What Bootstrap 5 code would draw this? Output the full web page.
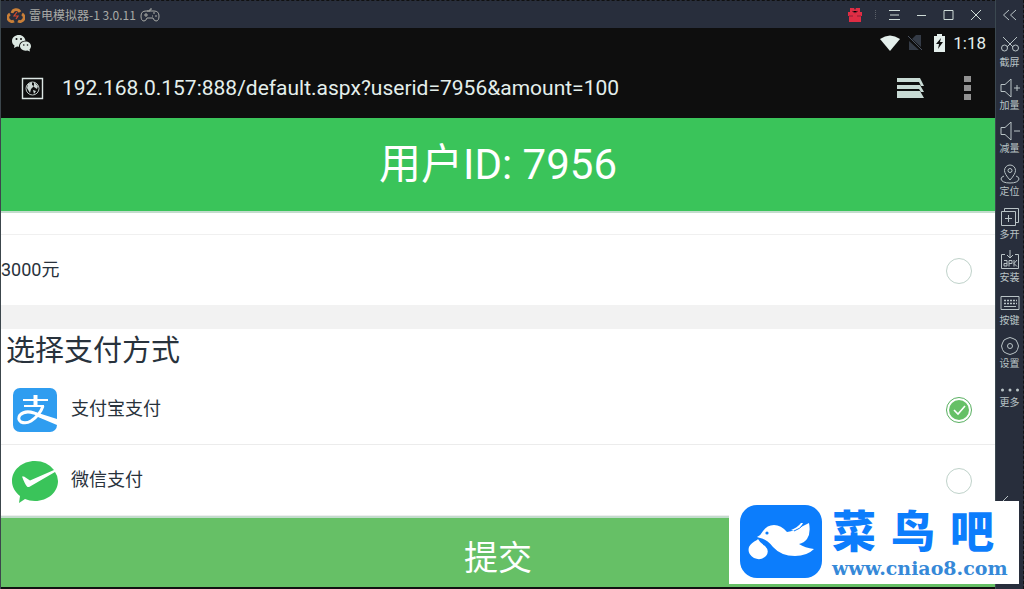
<!DOCTYPE html>
<html lang="zh-CN">
<head>
<meta charset="utf-8">
<meta name="viewport" content="width=device-width, initial-scale=1">
<title>用户ID: 7956</title>
<link href="https://cdn.jsdelivr.net/npm/bootstrap@5.3.0/dist/css/bootstrap.min.css" rel="stylesheet">
<style>
  :root { --chrome: #282e3c; --ink: #28323c; --pay: #3ac45a; --submit: #66c066; --logo: #0c7dfc; }
  body { font-family: Roboto, "Noto Sans CJK SC", sans-serif; color: var(--ink); background: var(--chrome); line-height: 1.5; }
  svg { display: block; flex: none; }
  .plain-btn { border: 0; background: none; padding: 0; color: inherit; }
  .line-icon { fill: none; stroke: currentColor; stroke-width: 1; }

  .emulator { border-left: 1px solid #3c464c; }
  .window-bar { background: var(--chrome); color: #a9aaa6; font: 12px/28px "Noto Sans CJK SC", sans-serif; border-top: 1px dashed #111; height: 28px; padding: 0 13px 0 6px; }
  .window-tools { gap: 16px; color: #cfdcd8; }
  .gift-group { gap: 12px; }
  .status-bar { background: #0e0e0e; color: #e4efec; font-size: 17px; line-height: 30px; padding: 0 9px 0 10px; }
  .address-bar { background: #0e0e0e; color: #e4efec; padding: 0 24px 0 20px; height: 60px; }
  .address { background: none; border: 0; color: inherit; font-size: 21px; padding: 2px 0 0; outline: 0; margin-left: 18px; min-width: 0; }

  .page-title { background: var(--pay); color: #fff; font-size: 42px; line-height: 93px; font-weight: 400; border-bottom: 2px solid #c3dccd; }
  .list-tail { height: 22px; border-bottom: 1px solid #f0f0f0; }
  .choice { height: 70px; padding-right: 23px; font-size: 18px; }
  .choice label { padding-bottom: 2px; }
  .choice + .choice { height: 71px; border-top: 1px solid #ececec; }
  .pay-choice { padding-left: 10px; }
  .pay-choice svg { margin-right: 12px; }
  .divider { height: 24px; background: #f2f2f2; }
  .section-title { font-size: 29px; line-height: 44px; height: 45px; font-weight: 400; padding-left: 5px; }
  .round { appearance: none; width: 26px; height: 26px; margin: 2px 0 0; border: 1px solid #bfd2ca; border-radius: 50%; background: #fff; padding: 2px; }
  .round:checked { border-color: #58b060; background: var(--submit) url("data:image/svg+xml,%3Csvg xmlns='http://www.w3.org/2000/svg' viewBox='0 0 20 20'%3E%3Cpath d='M5 10l4 4 7-8' fill='none' stroke='white' stroke-width='1.6'/%3E%3C/svg%3E") center / 20px no-repeat content-box; background-clip: content-box; }
  .submit { background: var(--submit); color: #fff; font-size: 34px; line-height: 50px; height: 71px; border: 0; border-top: 2px solid #c3dccd; padding: 10px 0 0; }
  .submit-wrap { border-top: 1px solid #eee; border-bottom: 2px solid #111; }

  .side { width: 29px; background: var(--chrome); color: #b9c3c6; border-left: 1px solid #3b4850; border-right: 1px dashed #111; gap: 9px; }
  .side-item { font-size: 10px; line-height: 16px; height: 34px; white-space: nowrap; }
  .side-top { height: 26px; padding-top: 4px; }

  .watermark { position: absolute; right: 5px; bottom: 5px; width: 290px; background: #fff; color: var(--logo); padding: 4px 0 6px 10px; gap: 9px; }
  .mark-name { font: 900 44px/46px "Noto Sans CJK SC", sans-serif; gap: 15px; margin-bottom: 6px; }
  .mark-url { font: 700 19px/20px "DejaVu Serif", serif; color: #3689d8; }
</style>
</head>
<body>
<div class="d-flex min-vh-100 position-relative">
  <main class="emulator flex-grow-1 d-flex flex-column bg-white">
    <div class="window-bar d-flex align-items-center">
      <svg width="18" height="18" viewBox="0 0 18 18" fill="none" stroke="#c97f38" stroke-width="2.8"><path d="M5 7a4.300 4.300 0 0 1 8-1M3 8a4 4 0 0 0 4 7M15 8a4 4 0 0 1-4 7"/><path d="M10 6L7 10h4l-2 3" stroke="#d8482c" stroke-width="1.2"/></svg>
      <span class="ms-1">雷电模拟器-1 3.0.11</span>
      <svg class="line-icon ms-1" width="20" height="14" viewBox="0 0 20 14"><path d="M7 3h3V1h2M6 3h8q5 0 5 5 0 5-3 5-2 0-3-3H7q-1 3-3 3-3 0-3-5 0-5 5-5zM4 7h4M6 5v4M13 5h2M15 8h2M12 8h1"/></svg>
      <div class="window-tools ms-auto d-flex align-items-center">
        <div class="gift-group d-flex align-items-center">
          <button class="plain-btn" aria-label="礼物"><svg width="14" height="16" viewBox="0 0 14 16"><path fill="#df2d44" d="M2 1h4l1 2 1-2h4v4h2v4h-1v6H1V9H0V5h2z"/><path stroke="#8c2136" d="M4 4l3 2 3-2M1 9h4m4 0h4"/></svg></button>
          <svg width="3" height="10" viewBox="0 0 3 10"><path d="M1.500 0v10" stroke="#5b6068" stroke-dasharray="1 1"/></svg>
          <button class="plain-btn" aria-label="菜单"><svg class="line-icon" width="11" height="12" viewBox="0 0 11 12"><path d="M0 1.500h11M1 6h9M0 10.500h11"/></svg></button>
        </div>
        <button class="plain-btn" aria-label="最小化"><svg class="line-icon" width="11" height="12" viewBox="0 0 11 12"><path d="M1 6.500h9"/></svg></button>
        <button class="plain-btn" aria-label="最大化"><svg class="line-icon" width="11" height="12" viewBox="0 0 11 12"><path d="M1 1.500h9v9H1z"/></svg></button>
        <button class="plain-btn" aria-label="关闭"><svg class="line-icon" width="12" height="12" viewBox="0 0 12 12"><path d="M1 1l10 10M11 1L1 11"/></svg></button>
      </div>
    </div>

    <div class="status-bar d-flex align-items-center">
      <svg width="22" height="18" viewBox="0 0 22 18" fill="#dce8e2"><path d="M8 1c-4 0-7 2.500-7 6 0 2 1 3.500 2.500 4.500L3 14l3-1.500 2 .3c0-4 3-6 6.500-6C14 3.500 11.500 1 8 1z"/><path d="M14.500 7.500c-3 0-5.500 2-5.500 4.600s2.500 4.600 5.500 4.600l2-.2 2.500 1-.5-2c1-1 1.500-2 1.500-3.400 0-2.600-2.500-4.600-5.500-4.600z"/><g fill="#0e0e0e"><circle cx="5.500" cy="5" r="1"/><circle cx="10" cy="5" r="1"/><circle cx="12.800" cy="11" r=".8"/><circle cx="16.500" cy="11" r=".8"/></g></svg>
      <svg class="ms-auto" width="20" height="16" viewBox="0 0 20 16"><path d="M0 4Q10-3 20 4L10 16z" fill="#e4efec"/></svg>
      <svg class="ms-2" width="14" height="16" viewBox="0 0 14 16"><path d="M4 4l4-4h5v12zM1 6v9h10z" fill="#343b46"/><path d="M0 1l14 14" stroke="#4a5260"/></svg>
      <svg class="ms-2 ps-1" width="15" height="18" viewBox="0 0 11 18"><path d="M0 2h3V0h5v2h3v16H0z" fill="#e4efec"/><path d="M7 4l-5 6h3l-1 5 5-7H6z" fill="#0e0e0e"/></svg>
      <span class="ms-2">1:18</span>
    </div>

    <div class="address-bar d-flex align-items-center">
      <svg width="23" height="23" viewBox="0 0 23 23"><path d="M1.500 1.500h20v20h-20z" fill="none" stroke="#dce6e3" stroke-width="1.400"/><circle cx="11.500" cy="11.500" r="6.500" fill="none" stroke="#b9c2c0"/><path d="M7 7l4-2v3l2 1-3 3-1 4-3-5zM13 5l4 4-1 3-3-2zM12 13l3 1-2 3z" fill="#cbd5d2"/></svg>
      <input class="address flex-grow-1" type="text" aria-label="网址" value="192.168.0.157:888/default.aspx?userid=7956&amp;amount=100">
      <button class="plain-btn" aria-label="标签页"><svg width="28" height="22" viewBox="0 0 28 22" fill="#c8dad4"><path d="M1 1h23l4 8h-3l-2-4H1zM1 8h23l4 7h-3l-2-3H1zM1 14h23l4 7H1z"/></svg></button>
      <button class="plain-btn ms-4 ps-3" aria-label="更多选项"><svg width="7" height="25" viewBox="0 0 7 25" fill="#929292"><path d="M0 0h7v6H0zM0 9h7v6H0zM0 18h7v6H0z"/></svg></button>
    </div>

    <h1 class="page-title text-center m-0">用户ID: 7956</h1>

    <form class="m-0">
      <div class="list-tail"></div>
      <div class="choice d-flex align-items-center">
        <label for="amount3000" class="flex-grow-1">3000元</label>
        <input class="round" type="radio" id="amount3000" name="amount">
      </div>
      <div class="divider"></div>
      <h2 class="section-title m-0">选择支付方式</h2>
      <div class="choice pay-choice d-flex align-items-center">
        <svg width="48" height="46" viewBox="0 -2 48 46"><rect x="2" width="44" height="44" rx="7" fill="#2f9df0"/><g fill="none" stroke="#fff"><path d="M12 12h25M13 18h20" stroke-width="2.200"/><path d="M24.500 7v11" stroke-width="4"/><path d="M32 18Q29 27 20 33 15 36 10 34 6 31 9 27 14 22 23 25L33 29.500" stroke-width="3"/></g><path d="M24 24l22 7v6L27 29z" fill="#fff"/></svg>
        <label for="alipay" class="flex-grow-1">支付宝支付</label>
        <input class="round" type="radio" id="alipay" name="pay" checked>
      </div>
      <div class="choice pay-choice d-flex align-items-center">
        <svg width="48" height="47" viewBox="0 -4 48 47"><path d="M24 0C11 0 1 9 1 20c0 6 3 11 8 15l-1 7 6-4c3 1 6 2 10 2 13 0 23-9 23-20q0-5-3-9L19 25.500q-2 1-3 0-2-2-5-10l2 0 6 4L43 9Q36 0 24 0z" fill="#3ac45a"/></svg>
        <label for="wechat" class="flex-grow-1">微信支付</label>
        <input class="round" type="radio" id="wechat" name="pay">
      </div>
      <div class="submit-wrap"><button class="submit w-100 d-block" type="button">提交</button></div>
    </form>
  </main>

  <aside class="side d-flex flex-column flex-shrink-0">
    <button class="plain-btn side-top d-flex justify-content-center align-items-center" aria-label="收起"><svg class="line-icon" width="16" height="12" viewBox="0 0 16 12"><path d="M7 1L1.500 6 7 11M14 1L8.500 6l5.500 5"/></svg></button>
    <button class="plain-btn side-item d-flex flex-column align-items-center"><svg class="line-icon" width="20" height="20" viewBox="0 0 20 20"><path d="M3 2l10 10M17 2L7 12"/><circle cx="4.500" cy="13" r="3"/><circle cx="15.500" cy="13" r="3"/></svg>截屏</button>
    <button class="plain-btn side-item d-flex flex-column align-items-center"><svg class="line-icon" width="20" height="20" viewBox="0 0 20 20"><path d="M1 6.500h4L11 1v18l-6-5.500H1zM14 10h6M17 7v6"/></svg>加量</button>
    <button class="plain-btn side-item d-flex flex-column align-items-center"><svg class="line-icon" width="20" height="20" viewBox="0 0 20 20"><path d="M1 6.500h4L11 1v18l-6-5.500H1zM14 10h6"/></svg>减量</button>
    <button class="plain-btn side-item d-flex flex-column align-items-center"><svg class="line-icon" width="20" height="20" viewBox="0 0 20 20"><path d="M10 16Q4.500 10 4.500 6.500a5.500 5.500 0 0 1 11 0Q15.500 10 10 16zM4 12q-3 1-3 3 1 4 9 4t9-4q0-2-3-3"/><circle cx="10" cy="6.500" r="2"/></svg>定位</button>
    <button class="plain-btn side-item d-flex flex-column align-items-center"><svg class="line-icon" width="20" height="20" viewBox="0 0 20 20"><path d="M1.500 4.500h14v14h-14zM4.500 4V1.500h14v14H16M8.500 8v7M5 11.500h7"/></svg>多开</button>
    <button class="plain-btn side-item d-flex flex-column align-items-center"><svg class="line-icon" width="20" height="20" viewBox="0 0 20 20"><path d="M5 4.500H1.500v14h17v-14H15M10 0v8M7 5l3 3 3-3"/><path d="M4 10.500h3V16H4v-2.500h3M9 16.500v-6h3v3H9M14 10v6.500M17 10l-3 3.500 3 3"/></svg>安装</button>
    <button class="plain-btn side-item d-flex flex-column align-items-center"><svg class="line-icon" width="20" height="20" viewBox="0 0 20 20"><path d="M1 3.500h18v13H1zM4 13.500h12"/><path d="M4 7.500h13M4 10.500h13" stroke-dasharray="2 1" stroke-width="1.500"/></svg>按键</button>
    <button class="plain-btn side-item d-flex flex-column align-items-center"><svg class="line-icon" width="20" height="20" viewBox="0 0 20 20"><path d="M7 2.500l3-1 3 1 3 1.500 1.500 3 1 3-1 3.500-1.500 2.500-3 1.500-3 1-3-1-3-1.500-1.500-2.500-1-3.500 1-3L4 4z"/><circle cx="10" cy="10" r="2.500"/></svg>设置</button>
    <button class="plain-btn side-item d-flex flex-column align-items-center"><svg width="20" height="16" viewBox="0 0 20 16" fill="currentColor"><circle cx="2.500" cy="11" r="1.500"/><circle cx="10" cy="11" r="1.500"/><circle cx="17.500" cy="11" r="1.500"/></svg>更多</button>
    <button class="plain-btn mt-auto mb-5 pb-4 d-flex" aria-label="返回"><svg class="line-icon ms-1" width="12" height="22" viewBox="0 0 12 22"><path d="M8 1L2 7l6 6"/></svg></button>
  </aside>

  <div class="watermark d-flex align-items-center">
    <svg width="84" height="73" viewBox="0 0 84 73"><rect x="1" width="82" height="73" rx="17" fill="#0c7dfc"/><g fill="#fff"><path d="M18 32Q22 30 24 26 28 20 35 20 42 20 48 27 56 26 62 22L70 18Q72 28 68 34 65 38 60 39 66 43 75 44 68 51 56 51 42 51 34 42 28 34 21 33z"/><path d="M52 25Q58 23 62 18L64 18Q62 23 56 26z"/><path d="M19 34Q21 38 26 41 31 46 27 51 22 56 15 53 8 49 10 42 12 38 18 35z"/></g><path d="M55 26Q61 24 65 19" fill="none" stroke="#0c7dfc"/><circle cx="28" cy="28" r="1.600" fill="#0c7dfc"/></svg>
    <div>
      <div class="mark-name d-flex"><span>菜</span><span>鸟</span><span>吧</span></div>
      <div class="mark-url">www.cniao8.com</div>
    </div>
  </div>
</div>
<script src="https://cdn.jsdelivr.net/npm/bootstrap@5.3.0/dist/js/bootstrap.bundle.min.js"></script>
</body>
</html>
